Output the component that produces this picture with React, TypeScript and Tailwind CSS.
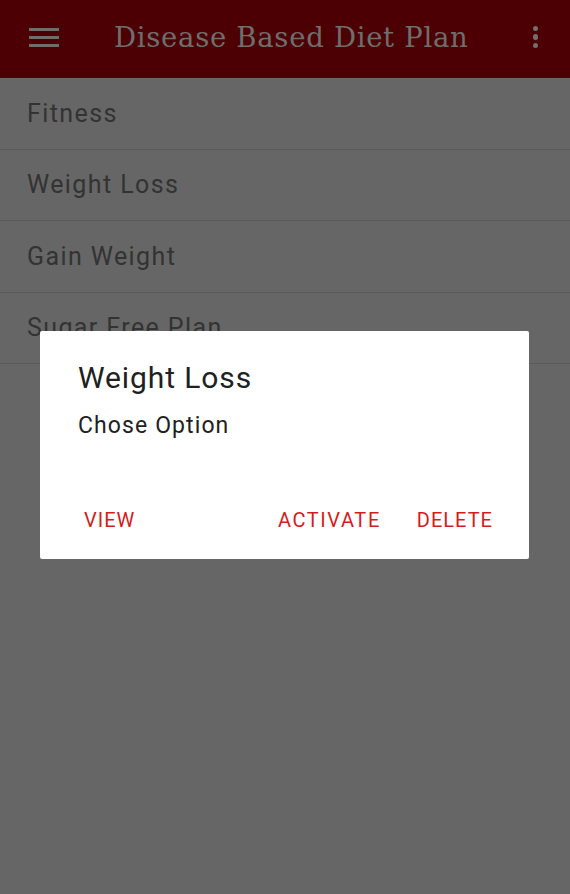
import React from "react";

const items = ["Fitness", "Weight Loss", "Gain Weight", "Sugar Free Plan"];

export default function App() {
  return (
    <div className="relative w-[570px] h-[894px] bg-[#666666] overflow-hidden" style={{ fontFamily: "Roboto, 'Liberation Sans', sans-serif" }}>
      <header className="h-[78px] bg-[#4d0003] flex items-center pb-[4px] pl-[29px]">
        <svg width="30" height="19" viewBox="0 0 30 19" className="shrink-0">
          <rect x="0" y="0" width="30" height="3" fill="#6e6e6e" />
          <rect x="0" y="8" width="30" height="3" fill="#6e6e6e" />
          <rect x="0" y="16" width="30" height="3" fill="#6e6e6e" />
        </svg>
        <h1 className="ml-[55px] mt-[2px] text-[27.5px] tracking-[0.7px] leading-none text-[#6e6e6e] whitespace-nowrap" style={{ fontFamily: "'DejaVu Serif', 'Liberation Serif', serif" }}>
          Disease Based Diet Plan
        </h1>
        <div className="ml-auto mr-[32px] flex flex-col gap-[3.2px] items-center">
          <span className="block w-[5.5px] h-[5.5px] rounded-full bg-[#707070]" />
          <span className="block w-[5.5px] h-[5.5px] rounded-full bg-[#707070]" />
          <span className="block w-[5.5px] h-[5.5px] rounded-full bg-[#707070]" />
        </div>
      </header>
      <ul>
        {items.map((t) => (
          <li key={t} className="h-[71.5px] border-b border-[#5a5a5a] flex items-center pl-[27px] text-[25px] tracking-[1.4px] leading-none text-[#333333]">
            {t}
          </li>
        ))}
      </ul>
      <div className="absolute left-[40px] top-[331px] w-[489px] h-[228px] bg-white rounded-[2px] flex flex-col">
        <div className="pl-[38px] pt-[32px] text-[30px] tracking-[0.9px] leading-none text-[#212121]">Weight Loss</div>
        <div className="pl-[38px] mt-[21px] text-[23px] tracking-[1.1px] leading-none text-[#212121]">Chose Option</div>
        <div className="mt-[73px] flex items-center text-[20px] tracking-[1px] leading-none text-[#d41c1c]">
          <span className="ml-[44px]">VIEW</span>
          <span className="ml-auto tracking-[1.6px]">ACTIVATE</span>
          <span className="ml-[36px] mr-[36px]">DELETE</span>
        </div>
      </div>
    </div>
  );
}
